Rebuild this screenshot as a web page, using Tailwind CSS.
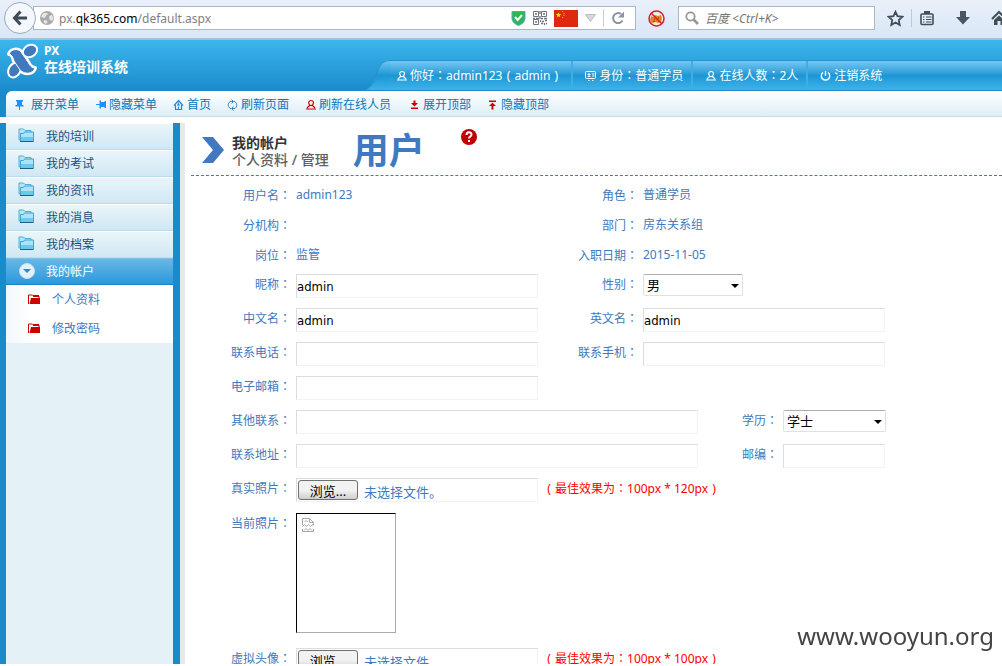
<!DOCTYPE html>
<html lang="zh-CN">

<head>
    <meta charset="UTF-8">
    <meta name="viewport" content="width=device-width, initial-scale=1.0">
    <title>在线培训系统</title>
    <script src="https://cdn.jsdelivr.net/npm/@tailwindcss/browser@4"></script>
</head>

<body class="h-screen flex flex-col overflow-hidden bg-white pb-0.5 font-['Noto_Sans','Noto_Sans_CJK_SC',sans-serif] text-xs text-[#4079c0]">
    <svg class="hidden">
        <symbol id="user" viewBox="0 0 12 12">
            <path d="M6 1.500c3 0 3 3 1.500 4.500S4.500 6 4 5 3.500 1.500 6 1.500zM4.500 6.500L2 9M7.500 6.500L10 9M1 10h10" fill="none" stroke="currentColor" stroke-width="1.200" />
        </symbol>
        <symbol id="folder" viewBox="0 0 16 15">
            <path d="M1 12V1h4.500l1.500 1.500h6V11z" fill="#b5e4f5" stroke="#4fb0d8" />
            <path d="M2.500 5.500h3l1-1.500h9v9h-13z" fill="#a9e4f8" stroke="#3fa4cf" />
            <path d="M3 9h12v3.500H3z" fill="#6cc8ec" />
            <path d="M2 13.500h13.500" stroke="#1d5f86" />
        </symbol>
        <symbol id="subfolder" viewBox="0 0 12 11">
            <path d="M.5 10V1h4l1 1h5.500v2" fill="none" stroke="#c00" />
            <path d="M1.500 10L3 4h9v6z" fill="#c00" />
            <path d="M5 1h6v2H5z" fill="#c00" />
        </symbol>
    </svg>

    <!-- Browser bar -->
    <div class="shrink-0 h-10 flex items-center pb-0.5 pl-1 overflow-hidden bg-linear-to-b from-[#e9f0fa] to-[#dae7f6] border-b-2 border-[#9fc3dd]">
        <button type="button" aria-label="后退" class="relative z-10 shrink-0 size-8 rounded-full border border-[#9aabbd] bg-[#f4f8fd] flex items-center justify-center">
            <svg class="w-4 h-4" viewBox="0 0 16 16" fill="none" stroke="#3f4a55" stroke-width="3"><path d="M8.500 1.500L2.500 8l6 6.500M3 8h12" /></svg>
        </button>
        <div class="-ml-[3px] flex-1 min-w-0 h-6 flex items-center gap-[7px] pl-1.5 pr-2.5 bg-white border border-[#a9b8c7]">
            <svg class="shrink-0 size-3.5" viewBox="0 0 14 14"><circle cx="7" cy="7" r="7" fill="#a9a9a9" /><path d="M3 2.500l3-1 2 1.500-2 1.500-.5 2-2 .5L1 5.500zM9 5l3-1 1.500 3-1.500 3-2.500-1.500zM4 9l3 .5.5 2-2 1.500L3.500 11z" fill="#e6e6e6" /></svg>
            <div class="flex-1 truncate text-[#808080] -ml-0.5 pt-px">px.<span class="text-black">qk365.com</span>/default.aspx</div>
            <svg class="shrink-0 w-[15px] h-4" viewBox="0 0 15 16"><path d="M1 1.500h13V8c0 4-3 6-6.500 7.500C4 14 1 12 1 8z" fill="#2fb457" stroke="#43b3c4" /><path d="M4 7l2.700 3L11 5" fill="none" stroke="#fff" stroke-width="2" /></svg>
            <svg class="shrink-0 size-3.5" viewBox="0 0 14 14" fill="none" stroke="#6b7480">
                <path d="M.5.5h5v5h-5zM8.500.5h5v5h-5zM.5 8.500h5v5h-5z" />
                <path d="M2 3h2M10 3h2M2 11h2M7 0v3M7 5v3M8 7.500h2M11 7.500h3M0 7.500h2M3 7.500h3M7.500 9v2M9 10.500h2M12 9.500h2M8 12.500h2M11.500 12v2M13 12.500h1" stroke-width="1.300" />
            </svg>
            <svg class="shrink-0 w-6 h-[17px]" viewBox="0 0 24 17"><path d="M0 0h24v17H0z" fill="#de2910" /><path d="M4.500 2.200l.8 1.900h2L5.700 5.400l.6 2-1.800-1.200-1.800 1.200.6-2-1.600-1.300h2z" fill="#ffde00" /><path d="M8 1.500h1.200M9.500 3.500h1.200M9.500 5.500h1.200M8 7.500h1.200" stroke="#ffb000" /></svg>
            <svg class="shrink-0 w-[11px] h-2" viewBox="0 0 11 8"><path d="M.5.5h10l-5 7z" fill="#d8d8d8" stroke="#b9bcc0" /></svg>
            <div class="shrink-0 w-px h-[18px] bg-[#c8ced4]"></div>
            <button type="button" aria-label="刷新" class="shrink-0"><svg class="block size-3.5" viewBox="0 0 14 14"><path d="M11.500 9.500A5 5 0 1 1 10 3" fill="none" stroke="#8b96a1" stroke-width="2" /><path d="M13 .5V6.500H7z" fill="#8b96a1" /></svg></button>
        </div>
        <svg class="shrink-0 ml-3 size-[17px]" viewBox="0 0 17 17"><circle cx="8.500" cy="8.500" r="7.500" fill="#f3ece8" /><path d="M3 6l2 1 2-2 3 1 3-1 1 3-1 4-3 1-3-1-3 1-2-3z" fill="#e8821c" /><path d="M6 9h1M10 8h1M5 12l2-1" stroke="#7a3c08" /><circle cx="8.500" cy="8.500" r="7.500" fill="none" stroke="#d0202c" stroke-width="1.500" /><path d="M3.300 3.300l10.500 10.500" stroke="#d0202c" stroke-width="1.500" /></svg>
        <div class="shrink-0 ml-[13px] w-[197px] h-6 flex items-center gap-1.5 px-1.5 bg-white border border-[#a9b8c7]">
            <svg class="shrink-0 size-3.5" viewBox="0 0 14 14" fill="none" stroke="#979797"><circle cx="5.500" cy="5.500" r="4.200" stroke-width="1.800" /><path d="M8.500 8.500l4.500 4.500" stroke-width="2.600" /></svg>
            <input type="search" aria-label="搜索" placeholder="百度 &lt;Ctrl+K&gt;" class="flex-1 min-w-0 pt-px italic placeholder:text-[#757575] outline-none">
        </div>
        <svg class="shrink-0 ml-3 size-[17px]" viewBox="0 0 17 17"><path d="M8.500 1.800l2 4.400 4.800.6-3.500 3.300.9 4.800-4.200-2.400-4.200 2.400.9-4.800L1.700 6.800l4.800-.6z" fill="none" stroke="#434e59" stroke-width="1.800" /></svg>
        <div class="shrink-0 ml-[7px] mr-[7px] w-px h-[18px] bg-[#bccad8]"></div>
        <svg class="shrink-0 size-4" viewBox="0 0 16 16" fill="none" stroke="#434e59"><rect x="2" y="4" width="12" height="10.500" rx="1" stroke-width="1.600" /><path d="M5 2.500h6" stroke-width="3" /><path d="M4 7h1.500M7 7h5.500M4 9.500h1.500M7 9.500h5.500M4 12h1.500M7 12h5.500" /></svg>
        <svg class="shrink-0 ml-5 size-4" viewBox="0 0 16 16"><path d="M5 1h6v6h4l-7 7.500L1 7h4z" fill="#4b5662" /></svg>
        <svg class="shrink-0 ml-5 -mr-[5px] size-4" viewBox="0 0 16 16"><path d="M1 9l7-7 7 7" fill="none" stroke="#434e59" stroke-width="2" /><path d="M3 10l5-4.500L13 10v5h-3.500v-4h-3v4H3z" fill="#434e59" /></svg>
    </div>

    <!-- Banner -->
    <header class="shrink-0 flex items-end justify-between h-[51px] bg-linear-to-b from-[#3bb6ec] to-[#198bcb] text-white">
        <div class="w-[362px] h-full shrink-0 flex items-start gap-1.5 pl-1.5 pt-[3px]">
            <svg class="w-8 h-9 shrink-0" viewBox="0 0 32 36">
                <g fill="#fff" stroke="#fff" stroke-width="4" stroke-linejoin="round">
                    <ellipse cx="24" cy="8" rx="6.500" ry="4.800" transform="rotate(-30 24 8)" />
                    <ellipse cx="8.500" cy="27" rx="6.800" ry="4.800" transform="rotate(-60 8.500 27)" />
                    <path d="M3 11C5 6 12 5 15 9l7 10c2 4 4 6 7 6-2 6-10 7-15 2L8 18c-1-4-3-7-5-7z" />
                </g>
                <g fill="#4079c0">
                    <ellipse cx="24" cy="8" rx="6.500" ry="4.800" transform="rotate(-30 24 8)" />
                    <ellipse cx="8.500" cy="27" rx="6.800" ry="4.800" transform="rotate(-60 8.500 27)" />
                </g>
                <path d="M3 11C5 6 12 5 15 9l7 10c2 4 4 6 7 6-2 6-10 7-15 2L8 18c-1-4-3-7-5-7z" fill="#4079c0" stroke="#fff" />
            </svg>
            <h1 class="font-bold leading-4 text-sm"><span class="block text-xs leading-4">PX</span>在线培训系统</h1>
        </div>
        <svg class="w-7 h-[31px] shrink-0" viewBox="0 0 28 31">
            <defs>
                <linearGradient id="tab" x1="0" y1="0" x2="0" y2="1"><stop offset="0" stop-color="#72c8f4" /><stop offset=".5" stop-color="#1c97d4" /><stop offset="1" stop-color="#3db3ea" /></linearGradient>
            </defs>
            <path d="M0 31C17 29 11 0 28 0v31z" fill="url(#tab)" />
            <path d="M0 30.500C17 29 11 .5 28 .5" fill="none" stroke="#2690cc" />
            <path d="M0 30.500h28" stroke="#1f8cc9" />
        </svg>
        <nav class="flex-1 h-[31px] flex border-t border-b border-t-[#1f97d4] border-b-[#1f8cc9] bg-linear-to-b from-[#72c8f4] via-[#1c97d4] to-[#3db3ea] whitespace-nowrap">
            <div class="flex items-center gap-0.5 pl-1.5 pr-[9px] border-r-2 border-[#3eaee6]">
                <svg class="size-3"><use href="#user" /></svg>
                <span>你好<span lang="zh-TW" class="font-['Noto_Sans_CJK_TC',sans-serif]">：</span>admin123<span class="inline-block w-3 text-center">(</span>admin<span class="inline-block w-3 text-center">)</span></span>
            </div>
            <div class="flex items-center gap-0.5 pl-3 pr-2 border-r-2 border-[#3eaee6]">
                <svg class="size-3" viewBox="0 0 12 12" fill="none" stroke="currentColor"><rect x=".5" y="1.500" width="10" height="7" rx="1" /><path d="M2.500 4.500h3M2.500 6.500h3M4 3v4M7 4h2.500M7 6h2.500M3 10.500h1.500M7 10.500h1.500" /></svg>
                <span>身份<span lang="zh-TW" class="font-['Noto_Sans_CJK_TC',sans-serif]">：</span>普通学员</span>
            </div>
            <div class="flex items-center gap-0.5 pl-3 pr-2 border-r-2 border-[#3eaee6]">
                <svg class="size-3"><use href="#user" /></svg>
                <span>在线人数<span lang="zh-TW" class="font-['Noto_Sans_CJK_TC',sans-serif]">：</span>2人</span>
            </div>
            <a href="#" class="flex items-center gap-0.5 pl-3 pr-2">
                <svg class="size-3" viewBox="0 0 12 12" fill="none" stroke="currentColor" stroke-width="1.400"><path d="M3 2.500a4.200 4.200 0 1 0 5 0M5.500 1v5" /></svg>
                <span>注销系统</span>
            </a>
        </nav>
    </header>

    <!-- Toolbar -->
    <div class="shrink-0 bg-[#198bcb] pl-1.5">
        <nav class="h-[26px] flex items-center gap-4 pl-2 pt-0.5 rounded-tl-md border-b border-[#c3dfec] bg-linear-to-b from-white to-[#dceef6] text-[#0d75bb] whitespace-nowrap">
            <a href="#" class="flex items-center gap-[5px]">
                <svg class="size-3" viewBox="0 0 12 12" fill="#1e90ff"><path d="M2 1h7v1.500H8V6h1.500v1.500h-8V6H3V2.500H2zM5 7.500h1V11H5z" /></svg>
                展开菜单
            </a>
            <a href="#" class="flex items-center gap-0.5">
                <svg class="size-3" viewBox="0 0 12 12" fill="#1e90ff"><path d="M11 2v7H9.500V8H6v1.500H4.500v-8H6V3h3.500V2zM4.500 5v1H1V5z" /></svg>
                隐藏菜单
            </a>
            <a href="#" class="flex items-center gap-0.5">
                <svg class="size-3" viewBox="0 0 12 12" fill="none" stroke="#1e86dd"><path d="M1 6.500l4.500-5 4.500 5M2.500 6v4.500h6V6M5.500 10V7.500M4 6h3M5.500 3.500v2" stroke-width="1.200" /></svg>
                首页
            </a>
            <a href="#" class="flex items-center gap-0.5">
                <svg class="size-3" viewBox="0 0 12 12" fill="none" stroke="#2a86cc"><path d="M4 10C.5 8 .5 4.500 3 2.500h3M7 2c3.500 2 3.500 5.500 1 7.500H5M4.500.5l2 2-2 2M6.500 7.500l-2 2 2 2" /></svg>
                刷新页面
            </a>
            <a href="#" class="flex items-center gap-0.5">
                <svg class="size-3 text-[#cc0000]"><use href="#user" /></svg>
                刷新在线人员
            </a>
            <a href="#" class="flex items-center gap-0.5 ml-0.5">
                <svg class="size-3" viewBox="0 0 12 12" fill="#c00"><path d="M4.500 1.500h2V4H9L5.500 7.500 2 4h2.500zM2 8.500h7V10H2z" /></svg>
                展开顶部
            </a>
            <a href="#" class="flex items-center gap-0.5">
                <svg class="size-3" viewBox="0 0 12 12" fill="#c00"><path d="M4.500 10.500h2V7H9L5.500 3.500 2 7h2.500zM2 1.500h7V3H2z" /></svg>
                隐藏顶部
            </a>
        </nav>
    </div>

    <div class="flex-1 min-h-0 flex mt-1.5 overflow-hidden">
        <!-- Side menu -->
        <aside class="shrink-0 w-[180px] border-l-6 border-r-7 border-[#198bcb] bg-[#e4f2f8] text-[#14507f]">
            <a href="#" class="flex items-center gap-3 h-[27px] pl-3 border-t border-t-white border-b border-b-[#b9dcee] bg-linear-to-b from-[#eaf5fa] to-[#d0e8f4]"><svg class="w-4 h-[15px] mb-0.5"><use href="#folder" /></svg>我的培训</a>
            <a href="#" class="flex items-center gap-3 h-[27px] pl-3 border-t border-t-white border-b border-b-[#b9dcee] bg-linear-to-b from-[#eaf5fa] to-[#d0e8f4]"><svg class="w-4 h-[15px] mb-0.5"><use href="#folder" /></svg>我的考试</a>
            <a href="#" class="flex items-center gap-3 h-[27px] pl-3 border-t border-t-white border-b border-b-[#b9dcee] bg-linear-to-b from-[#eaf5fa] to-[#d0e8f4]"><svg class="w-4 h-[15px] mb-0.5"><use href="#folder" /></svg>我的资讯</a>
            <a href="#" class="flex items-center gap-3 h-[27px] pl-3 border-t border-t-white border-b border-b-[#b9dcee] bg-linear-to-b from-[#eaf5fa] to-[#d0e8f4]"><svg class="w-4 h-[15px] mb-0.5"><use href="#folder" /></svg>我的消息</a>
            <a href="#" class="flex items-center gap-3 h-[27px] pl-3 border-t border-t-white border-b border-b-[#b9dcee] bg-linear-to-b from-[#eaf5fa] to-[#d0e8f4]"><svg class="w-4 h-[15px] mb-0.5"><use href="#folder" /></svg>我的档案</a>
            <a href="#" class="flex items-center gap-2.5 h-[27px] pl-3 border-t border-t-[#7cc3ea] border-b border-b-[#1585c6] bg-linear-to-b from-[#66b7e5] to-[#2799db] text-white">
                <svg class="size-[18px] mb-0.5" viewBox="0 0 18 18"><circle cx="9" cy="9" r="7.500" fill="#e3f1fa" stroke="#c3e1f3" /><path d="M5 7h8l-4 4z" fill="#2c8cc8" /></svg>我的帐户
            </a>
            <div class="bg-linear-to-r from-[#f1f8fb] via-white via-15% to-white text-[#4079c0]">
                <a href="#" class="flex items-center gap-3 h-[29px] pl-[22px]"><svg class="w-3 h-[11px]"><use href="#subfolder" /></svg>个人资料</a>
                <a href="#" class="flex items-center gap-3 h-[29px] pl-[22px]"><svg class="w-3 h-[11px]"><use href="#subfolder" /></svg>修改密码</a>
            </div>
        </aside>
        <div class="shrink-0 w-[5px] bg-[#e8e8e8]"></div>

        <main class="flex-1 min-w-0 pl-1.5">
            <div class="flex items-start h-[53px] pl-[11px] border-b border-dashed border-[#4079c0]">
                <svg class="shrink-0 w-[22px] h-[26px] mt-3.5" viewBox="0 0 22 26"><path d="M0 0h11l11 13-11 13H0l11-13z" fill="#4079c0" /></svg>
                <h2 class="ml-2 mt-[11px] text-sm leading-[17px] font-bold text-[#333] whitespace-nowrap">我的帐户<span class="block font-medium text-[#606060]">个人资料 / 管理</span></h2>
                <p class="ml-6 mt-2.5 text-4xl leading-9 font-bold">用户</p>
                <svg class="ml-9 mt-1.5 size-4" viewBox="0 0 16 16"><circle cx="8" cy="8" r="8" fill="#c00000" /><path d="M5.500 6c0-3.500 5-3.500 5-.5C10.500 7.500 8 7.500 8 9.500M8 11v2" fill="none" stroke="#fff" stroke-width="2" /></svg>
            </div>

            <form class="pt-1 whitespace-nowrap">
                <div class="flex gap-[5px] h-[30px] items-center">
                    <span class="w-[100px] text-right">用户名<span lang="zh-TW" class="font-['Noto_Sans_CJK_TC',sans-serif]">：</span></span>
                    <span class="w-[242px]">admin123</span>
                    <span class="w-[95px] text-right">角色<span lang="zh-TW" class="font-['Noto_Sans_CJK_TC',sans-serif]">：</span></span>
                    <span>普通学员</span>
                </div>
                <div class="flex gap-[5px] h-[30px] items-center">
                    <span class="w-[100px] text-right">分机构<span lang="zh-TW" class="font-['Noto_Sans_CJK_TC',sans-serif]">：</span></span>
                    <span class="w-[242px]"></span>
                    <span class="w-[95px] text-right">部门<span lang="zh-TW" class="font-['Noto_Sans_CJK_TC',sans-serif]">：</span></span>
                    <span>房东关系组</span>
                </div>
                <div class="flex gap-[5px] h-[30px] items-center">
                    <span class="w-[100px] text-right">岗位<span lang="zh-TW" class="font-['Noto_Sans_CJK_TC',sans-serif]">：</span></span>
                    <span class="w-[242px]">监管</span>
                    <span class="w-[95px] text-right">入职日期<span lang="zh-TW" class="font-['Noto_Sans_CJK_TC',sans-serif]">：</span></span>
                    <span>2015-11-05</span>
                </div>
                <div class="flex items-start gap-[5px] h-[34px] pt-1 leading-5">
                    <label for="nickname" class="w-[100px] text-right">昵称<span lang="zh-TW" class="font-['Noto_Sans_CJK_TC',sans-serif]">：</span></label>
                    <input type="text" id="nickname" value="admin" class="w-[242px] h-6 border border-t-[#dcdcdc] border-l-[#dcdcdc] border-b-[#f2f2f2] border-r-[#f2f2f2] font-['DejaVu_Sans_Condensed',sans-serif] text-[13px] text-black">
                    <label for="gender" class="w-[95px] text-right">性别<span lang="zh-TW" class="font-['Noto_Sans_CJK_TC',sans-serif]">：</span></label>
                    <div class="relative">
                        <select id="gender" class="block appearance-none w-[100px] h-[22px] pl-[3px] rounded-xs border border-[#dfe1e8] border-t-[#abadb3] bg-white text-[13px] text-black">
                            <option>男</option>
                            <option>女</option>
                        </select>
                        <svg class="absolute right-1 top-2.5 w-2 h-1 pointer-events-none" viewBox="0 0 8 4"><path d="M0 0h8L4 4z" /></svg>
                    </div>
                </div>
                <div class="flex items-start gap-[5px] h-[34px] pt-1 leading-5">
                    <label for="cn-name" class="w-[100px] text-right">中文名<span lang="zh-TW" class="font-['Noto_Sans_CJK_TC',sans-serif]">：</span></label>
                    <input type="text" id="cn-name" value="admin" class="w-[242px] h-6 border border-t-[#dcdcdc] border-l-[#dcdcdc] border-b-[#f2f2f2] border-r-[#f2f2f2] font-['DejaVu_Sans_Condensed',sans-serif] text-[13px] text-black">
                    <label for="en-name" class="w-[95px] text-right">英文名<span lang="zh-TW" class="font-['Noto_Sans_CJK_TC',sans-serif]">：</span></label>
                    <input type="text" id="en-name" value="admin" class="w-[242px] h-6 border border-t-[#dcdcdc] border-l-[#dcdcdc] border-b-[#f2f2f2] border-r-[#f2f2f2] font-['DejaVu_Sans_Condensed',sans-serif] text-[13px] text-black">
                </div>
                <div class="flex items-start gap-[5px] h-[34px] pt-1 leading-5">
                    <label for="phone" class="w-[100px] text-right">联系电话<span lang="zh-TW" class="font-['Noto_Sans_CJK_TC',sans-serif]">：</span></label>
                    <input type="text" id="phone" class="w-[242px] h-6 border border-t-[#dcdcdc] border-l-[#dcdcdc] border-b-[#f2f2f2] border-r-[#f2f2f2] text-[13px] text-black">
                    <label for="mobile" class="w-[95px] text-right">联系手机<span lang="zh-TW" class="font-['Noto_Sans_CJK_TC',sans-serif]">：</span></label>
                    <input type="text" id="mobile" class="w-[242px] h-6 border border-t-[#dcdcdc] border-l-[#dcdcdc] border-b-[#f2f2f2] border-r-[#f2f2f2] text-[13px] text-black">
                </div>
                <div class="flex items-start gap-[5px] h-[34px] pt-1 leading-5">
                    <label for="email" class="w-[100px] text-right">电子邮箱<span lang="zh-TW" class="font-['Noto_Sans_CJK_TC',sans-serif]">：</span></label>
                    <input type="text" id="email" class="w-[242px] h-6 border border-t-[#dcdcdc] border-l-[#dcdcdc] border-b-[#f2f2f2] border-r-[#f2f2f2] text-[13px] text-black">
                </div>
                <div class="flex items-start gap-[5px] h-[34px] pt-1 leading-5">
                    <label for="other" class="w-[100px] text-right">其他联系<span lang="zh-TW" class="font-['Noto_Sans_CJK_TC',sans-serif]">：</span></label>
                    <input type="text" id="other" class="w-[402px] h-6 border border-t-[#dcdcdc] border-l-[#dcdcdc] border-b-[#f2f2f2] border-r-[#f2f2f2] text-[13px] text-black">
                    <label for="degree" class="w-[75px] text-right">学历<span lang="zh-TW" class="font-['Noto_Sans_CJK_TC',sans-serif]">：</span></label>
                    <div class="relative">
                        <select id="degree" class="block appearance-none w-[103px] h-[22px] pl-[3px] rounded-xs border border-[#dfe1e8] border-t-[#abadb3] bg-white text-[13px] text-black">
                            <option>学士</option>
                            <option>硕士</option>
                            <option>博士</option>
                        </select>
                        <svg class="absolute right-1 top-2.5 w-2 h-1 pointer-events-none" viewBox="0 0 8 4"><path d="M0 0h8L4 4z" /></svg>
                    </div>
                </div>
                <div class="flex items-start gap-[5px] h-[34px] pt-1 leading-5">
                    <label for="address" class="w-[100px] text-right">联系地址<span lang="zh-TW" class="font-['Noto_Sans_CJK_TC',sans-serif]">：</span></label>
                    <input type="text" id="address" class="w-[402px] h-6 border border-t-[#dcdcdc] border-l-[#dcdcdc] border-b-[#f2f2f2] border-r-[#f2f2f2] text-[13px] text-black">
                    <label for="zip" class="w-[75px] text-right">邮编<span lang="zh-TW" class="font-['Noto_Sans_CJK_TC',sans-serif]">：</span></label>
                    <input type="text" id="zip" class="w-[102px] h-6 border border-t-[#dcdcdc] border-l-[#dcdcdc] border-b-[#f2f2f2] border-r-[#f2f2f2] text-[13px] text-black">
                </div>
                <div class="flex items-start gap-[5px] h-[34px] pt-1 leading-5">
                    <label for="photo-btn" class="w-[100px] text-right">真实照片<span lang="zh-TW" class="font-['Noto_Sans_CJK_TC',sans-serif]">：</span></label>
                    <div class="w-[242px] h-6 flex gap-1.5 pl-px pt-px border border-t-[#dcdcdc] border-l-[#dcdcdc] border-b-[#f2f2f2] border-r-[#f2f2f2] text-[13px]">
                        <button type="button" id="photo-btn" data-file="photo" class="w-[60px] h-5 pt-0.5 leading-4 rounded-[3px] border border-[#707070] bg-linear-to-b from-[#f2f2f2] from-50% to-[#cfcfcf] text-black">浏览...</button>
                        <span class="pt-0.5">未选择文件。</span>
                        <input type="file" id="photo" class="hidden">
                    </div>
                    <span class="text-[#ff0000]"><span class="inline-block w-3 text-center">(</span>最佳效果为<span lang="zh-TW" class="font-['Noto_Sans_CJK_TC',sans-serif]">：</span>100px * 120px<span class="inline-block w-3 text-center">)</span></span>
                </div>
                <div class="flex items-start gap-[5px] h-[136px] pt-[5px] leading-5">
                    <span class="w-[100px] text-right">当前照片<span lang="zh-TW" class="font-['Noto_Sans_CJK_TC',sans-serif]">：</span></span>
                    <div class="w-[100px] h-[120px] pl-[5px] pt-1 border border-t-black border-l-black border-b-[#aaa] border-r-[#aaa]">
                        <svg class="w-3 h-3.5" viewBox="0 0 12 14" fill="none" stroke="#a8a8a8"><path d="M.5 7V.5h7l4 4V7M7.500.5v4h4M.5 8.500l2-2 2 2 2-2 2 2 2-2 1 1.500M.5 11v2.500h11V11M2 12.500l2-2 2 2 2-2 2 2M2.500 4l1.500-1.500L5.500 4" /></svg>
                    </div>
                </div>
                <div class="flex items-start gap-[5px] h-[34px] pt-1 leading-5">
                    <label for="avatar-btn" class="w-[100px] text-right">虚拟头像<span lang="zh-TW" class="font-['Noto_Sans_CJK_TC',sans-serif]">：</span></label>
                    <div class="w-[242px] h-6 flex gap-1.5 pl-px pt-px border border-t-[#dcdcdc] border-l-[#dcdcdc] border-b-[#f2f2f2] border-r-[#f2f2f2] text-[13px]">
                        <button type="button" id="avatar-btn" data-file="avatar" class="w-[60px] h-5 pt-0.5 leading-4 rounded-[3px] border border-[#707070] bg-linear-to-b from-[#f2f2f2] from-50% to-[#cfcfcf] text-black">浏览...</button>
                        <span class="pt-0.5">未选择文件。</span>
                        <input type="file" id="avatar" class="hidden">
                    </div>
                    <span class="text-[#ff0000]"><span class="inline-block w-3 text-center">(</span>最佳效果为<span lang="zh-TW" class="font-['Noto_Sans_CJK_TC',sans-serif]">：</span>100px * 100px<span class="inline-block w-3 text-center">)</span></span>
                </div>
            </form>
        </main>
    </div>

    <div class="fixed right-2 bottom-3.5 text-2xl leading-8 text-[#444]">www.wooyun.org</div>

    <script>
        document.querySelectorAll('[data-file]').forEach(button => {
            const input = document.getElementById(button.dataset.file);
            button.addEventListener('click', () => input.click());
            input.addEventListener('change', () => {
                button.nextElementSibling.textContent = input.files.length ? input.files[0].name : '未选择文件。';
            });
        });
    </script>
</body>

</html>
